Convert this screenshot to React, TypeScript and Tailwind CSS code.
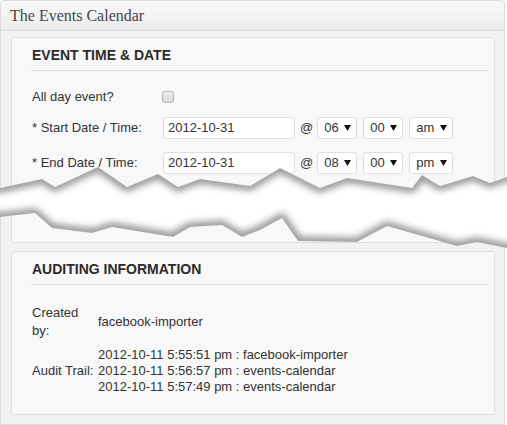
import React from "react";

const topEdge: [number, number][] = [
    [0, 188], [42, 179], [55, 187], [98, 167], [127, 187], [158, 174], [178, 187],
    [200, 179], [250, 186], [280, 168], [320, 188], [347, 178], [412, 188], [422, 175],
    [440, 186], [473, 176], [490, 183], [507, 177],
];

const bottomEdge: [number, number][] = [
    [0, 217], [35, 213], [52, 228], [92, 233], [112, 227], [173, 237], [190, 227],
    [222, 225], [242, 237], [260, 230], [282, 218], [298, 241], [357, 242], [387, 226],
    [457, 246], [477, 242], [507, 248],
];

const pts = (list: [number, number][]) => list.map(([x, y]) => `${x},${y}`).join(" ");

const TornPaper = () => {
    const band = pts([...topEdge, ...[...bottomEdge].reverse()]);
    return (
        <svg
            className="absolute left-0 top-0 pointer-events-none"
            width="507"
            height="425"
            viewBox="0 0 507 425"
        >
            <defs>
                <clipPath id="band">
                    <polygon points={band} />
                </clipPath>
                <filter id="soft" x="-10%" y="-50%" width="120%" height="200%">
                    <feGaussianBlur stdDeviation="3.5" />
                </filter>
            </defs>
            <g clipPath="url(#band)">
                <rect x="0" y="150" width="507" height="110" fill="#ffffff" />
                <g filter="url(#soft)" fill="none" stroke="#000" strokeOpacity="0.42" strokeWidth="9" strokeLinejoin="round">
                    <polyline points={pts([[-20, 188], ...topEdge, [527, 177]])} />
                    <polyline points={pts([[-20, 217], ...bottomEdge, [527, 248]])} />
                </g>
            </g>
        </svg>
    );
};

const Select = ({ value, width }: { value: string; width: string }) => (
    <div className={`${width} h-[22px] flex items-center justify-between pl-[6px] pr-[5px] bg-white border border-[#dfdfdf] rounded-[3px]`}>
        <span>{value}</span>
        <svg width="7" height="6" viewBox="0 0 7 6">
            <polygon points="0,0 7,0 3.5,6" fill="#111" />
        </svg>
    </div>
);

const DateRow = ({ label, hour, ampm, className }: { label: string; hour: string; ampm: string; className: string }) => (
    <div className={`flex items-center h-[22px] ${className}`}>
        <div className="w-[131px]">{label}</div>
        <div className="w-[132px] h-[22px] flex items-center pl-[4px] bg-white border border-[#dfdfdf] rounded-[3px]">
            2012-10-31
        </div>
        <span className="ml-[5px] mr-[4px]">@</span>
        <Select value={hour} width="w-[40px]" />
        <div className="w-[6px]" />
        <Select value="00" width="w-[40px]" />
        <div className="w-[6px]" />
        <Select value={ampm} width="w-[44px]" />
    </div>
);

const Heading = ({ children }: { children: React.ReactNode }) => (
    <div className="pb-[5px] border-b border-[#dfdfdf]">
        <h3 className="pl-[1px] text-[14px] leading-[20px] font-bold text-[#2b2b2b]">{children}</h3>
    </div>
);

export default function App() {
    return (
        <div
            className="relative w-[507px] h-[425px] bg-white overflow-hidden text-[13px] text-[#333]"
            style={{ fontFamily: '"Liberation Sans", Arial, sans-serif' }}
        >
            <div className="w-[505px] h-[425px] flex flex-col bg-[#f2f2f2] border border-[#dcdcdc] rounded-t-[4px]">
                <div className="h-[30px] shrink-0 flex items-center pl-[9px] bg-gradient-to-b from-[#f9f9f9] to-[#ececec] border-b border-[#dcdcdc] rounded-t-[4px]">
                    <span
                        className="text-[16px] text-[#464646] leading-none pt-[1px]"
                        style={{ fontFamily: '"Liberation Serif", "Times New Roman", serif' }}
                    >
                        The Events Calendar
                    </span>
                </div>

                <div className="mt-[6px] ml-[10px] w-[484px] h-[206px] pt-[7px] pl-[19px] pr-[6px] bg-[#f8f8f8] border border-[#dfdfdf] rounded-[3px]">
                    <Heading>EVENT TIME &amp; DATE</Heading>
                    <div className="pl-[1px]">
                        <div className="flex items-center h-[22px] mt-[15px]">
                            <div className="w-[130px]">All day event?</div>
                            <div className="w-[12px] h-[12px] rounded-[3px] border border-[#b4b4b4] bg-gradient-to-b from-[#ececec] to-[#dcdcdc]" />
                        </div>
                        <DateRow label="* Start Date / Time:" hour="06" ampm="am" className="mt-[9px]" />
                        <DateRow label="* End Date / Time:" hour="08" ampm="pm" className="mt-[13px]" />
                    </div>
                </div>

                <div className="mt-[8px] ml-[10px] w-[484px] h-[164px] pt-[7px] pl-[19px] pr-[5px] bg-[#f8f8f8] border border-[#dfdfdf] rounded-[3px]">
                    <Heading>AUDITING INFORMATION</Heading>
                    <div className="pl-[1px]">
                        <div className="flex items-center mt-[19px] leading-[18px]">
                            <div className="w-[66px]">Created<br />by:</div>
                            <div>facebook-importer</div>
                        </div>
                        <div className="flex items-center mt-[7px] leading-[16px]">
                            <div className="w-[66px]">Audit Trail:</div>
                            <div className="flex flex-col">
                                <span>2012-10-11 5:55:51 pm : facebook-importer</span>
                                <span>2012-10-11 5:56:57 pm : events-calendar</span>
                                <span>2012-10-11 5:57:49 pm : events-calendar</span>
                            </div>
                        </div>
                    </div>
                </div>
            </div>
            <TornPaper />
        </div>
    );
}
